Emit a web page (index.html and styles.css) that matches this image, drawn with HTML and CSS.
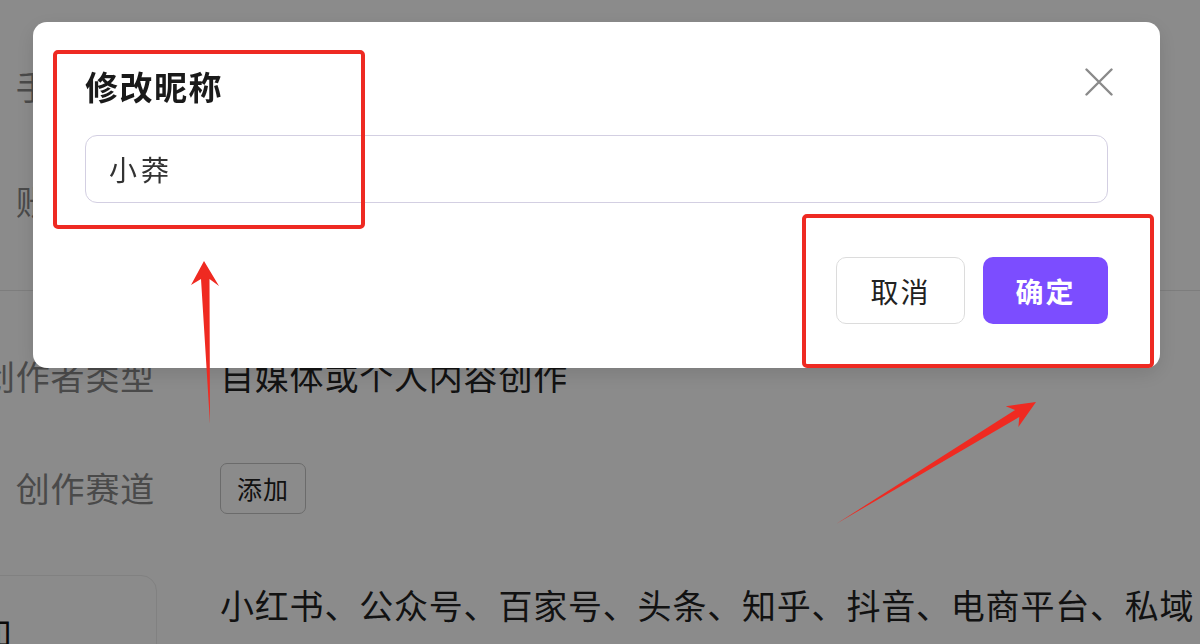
FILE: index.html
```html
<!DOCTYPE html>
<html lang="zh-CN">
<head>
<meta charset="utf-8">
<title>修改昵称</title>
<link rel="stylesheet" href="styles.css">
</head>
<body>
<main class="page">
  <section class="info">
    <div class="row">
      <div class="label">手机号码</div>
      <div class="value">138****6688</div>
    </div>
    <div class="row">
      <div class="label">账号昵称</div>
      <div class="value">小莽</div>
    </div>
  </section>
  <hr class="divider">
  <section class="profile">
    <div class="row first">
      <div class="label">创作者类型</div>
      <div class="value">自媒体或个人内容创作</div>
    </div>
    <div class="row">
      <div class="label">创作赛道</div>
      <div class="value"><span class="add-btn">添加</span></div>
    </div>
    <div class="row last">
      <div class="card">添加</div>
      <div class="value nowrap">小红书、公众号、百家号、头条、知乎、抖音、电商平台、私域</div>
    </div>
  </section>
</main>

<div class="mask"></div>

<div class="modal" role="dialog">
  <div class="modal-header">
    <h2 class="modal-title">修改昵称</h2>
    <button class="close" aria-label="关闭">
      <svg width="28" height="28" viewBox="0 0 28 28"><path d="M1.5 1.5 L26.5 26.5 M26.5 1.5 L1.5 26.5" stroke="#8a8a8a" stroke-width="2.4" stroke-linecap="round" fill="none"/></svg>
    </button>
  </div>
  <input class="name-input" type="text" value="小莽">
  <div class="modal-footer">
    <button class="btn btn-cancel">取消</button>
    <button class="btn btn-ok">确定</button>
  </div>
</div>

<div class="annot">
  <div class="mark mark-title"></div>
  <div class="mark mark-actions"></div>
  <svg class="arrows" width="1200" height="644" viewBox="0 0 1200 644">
    <polygon fill="#ef2a21" points="204,261 219,286 209.5,279 210,424 201,279 191,285"/>
    <polygon fill="#ef2a21" points="1036,402 1005.8,406.3 1015.1,410.1 836,524 1019.3,416.9 1018.4,426.9"/>
  </svg>
</div>
</body>
</html>
```

FILE: styles.css
```css
* { box-sizing: border-box; }

html, body {
  margin: 0;
  padding: 0;
}

body {
  width: 1200px;
  height: 644px;
  overflow: hidden;
  background: #ffffff;
  font-family: "Noto Sans CJK SC", "Noto Sans", sans-serif;
  color: #222;
}

.page {
  padding-top: 29px;
}

.row {
  display: grid;
  grid-template-columns: 200px 1fr;
  column-gap: 65px;
  margin-left: -45px;
  align-items: center;
  height: 115px;
  font-size: 34px;
  letter-spacing: 0.8px;
  line-height: 1.3;
}

.profile .row { height: 112px; }
.profile .row.first { margin-top: 29px; }

.label {
  text-align: right;
  white-space: nowrap;
  color: #888;
}

.value { color: #222; white-space: nowrap; }

.divider {
  margin: 31px 0 0;
  border: 0;
  border-top: 1px solid #e6e6e6;
  height: 0;
}

.add-btn {
  display: inline-flex;
  align-items: center;
  height: 51px;
  padding: 0 16px;
  border: 1.5px solid #c4c4c4;
  border-radius: 7px;
  font-size: 25px;
  letter-spacing: 1px;
  color: #222;
}

.profile .row.last {
  align-items: start;
  padding-top: 31px;
  height: auto;
}

.row.last .value { line-height: 60px; }

.card {
  justify-self: end;
  margin-right: -2px;
  width: 257px;
  height: 120px;
  border: 1.5px solid #ececec;
  border-radius: 16px;
  padding: 26px 0 0 42px;
  color: #111;
  line-height: 60px;
}

.mask {
  position: fixed;
  inset: 0;
  background: rgba(0, 0, 0, 0.455);
}

.modal {
  position: fixed;
  left: 33px;
  top: 22px;
  width: 1127px;
  padding: 42px 52px 44px;
  background: #fff;
  border-radius: 14px;
  box-shadow: 0 6px 20px rgba(0, 0, 0, 0.12);
}

.modal-header {
  display: flex;
  align-items: center;
  justify-content: space-between;
  height: 44px;
}

.modal-title {
  margin: 0;
  font-size: 33px;
  line-height: 44px;
  font-weight: 700;
  color: #1a1a1a;
  letter-spacing: 1.5px;
}

.close {
  margin: 0 -5px 8px 0;
  padding: 0;
  border: 0;
  background: none;
  width: 28px;
  height: 28px;
  display: flex;
}

.name-input {
  display: block;
  width: 100%;
  height: 68px;
  margin-top: 27px;
  padding: 0 23px;
  border: 1.5px solid #d3cfe2;
  border-radius: 12px;
  font-family: "Noto Sans CJK SC", "Noto Sans", sans-serif;
  font-size: 28px;
  letter-spacing: 4px;
  color: #333;
  outline: none;
  background: #fff;
}

.modal-footer {
  display: flex;
  justify-content: flex-end;
  gap: 18px;
  margin-top: 54px;
}

.btn {
  height: 67px;
  border-radius: 10px;
  font-family: "Noto Sans CJK SC", "Noto Sans", sans-serif;
  font-size: 28px;
  letter-spacing: 2px;
  padding: 0;
}

.btn-cancel {
  width: 129px;
  background: #fff;
  border: 1.5px solid #dcdcdc;
  color: #222;
}

.btn-ok {
  width: 125px;
  background: #7c4dff;
  border: 0;
  color: #fff;
  font-weight: 700;
}

.annot {
  position: fixed;
  inset: 0;
  pointer-events: none;
}

.mark {
  position: absolute;
  border: 4px solid #ee2a22;
  border-radius: 5px;
}

.mark-title {
  left: 53px;
  top: 50px;
  width: 312px;
  height: 179px;
}

.mark-actions {
  left: 802px;
  top: 214px;
  width: 352px;
  height: 154px;
}

.arrows {
  position: absolute;
  left: 0;
  top: 0;
}
```
